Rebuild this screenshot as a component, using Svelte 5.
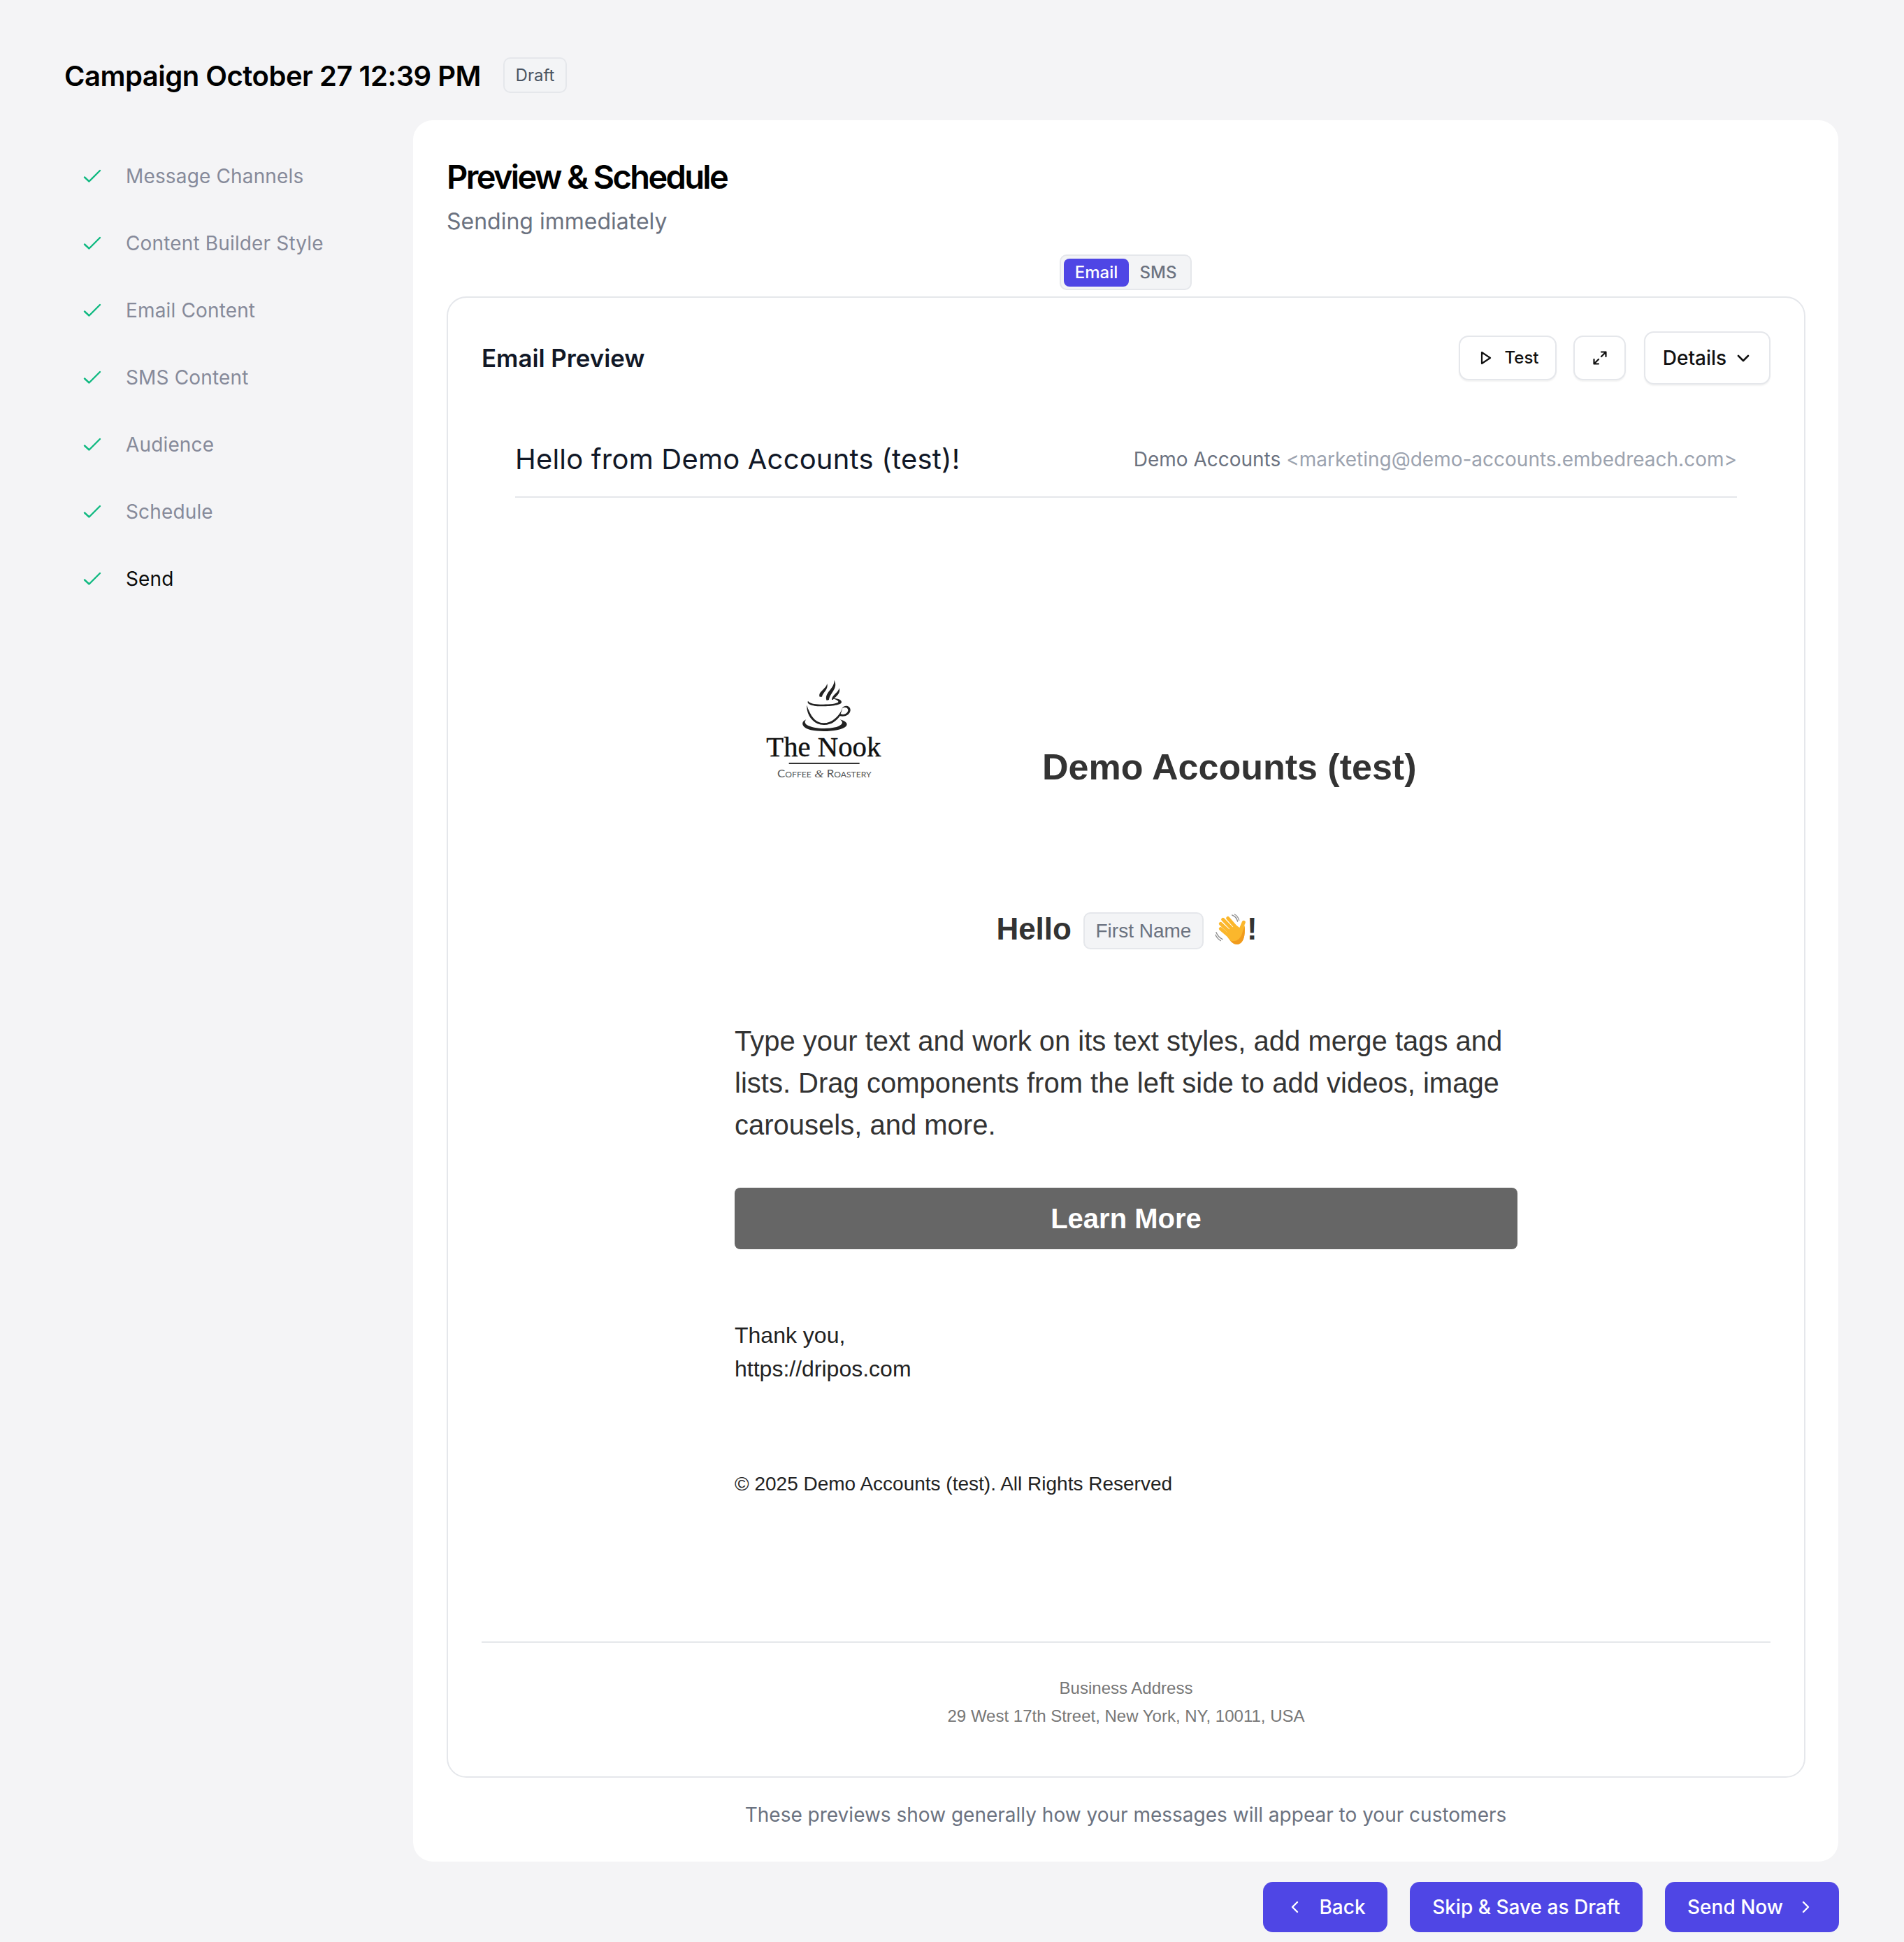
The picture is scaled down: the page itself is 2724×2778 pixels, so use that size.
<script>
  const steps = ['Message Channels','Content Builder Style','Email Content','SMS Content','Audience','Schedule','Send'];
</script>

<div class="page">
  <header class="top">
    <h1>Campaign October 27 12:39 PM</h1>
    <span class="draft">Draft</span>
  </header>
  <div class="main">
    <nav class="steps">
      {#each steps as s, i}
        <div class="step" class:current={i === steps.length - 1}>
          <svg class="check" viewBox="0 0 28 20" width="28" height="20"><path d="M3 11.5 L9.5 17.5 L25 2" fill="none" stroke="#10b981" stroke-width="2.4" stroke-linecap="round" stroke-linejoin="round"/></svg>
          <span>{s}</span>
        </div>
      {/each}
    </nav>
    <section class="card">
      <h2>Preview &amp; Schedule</h2>
      <p class="sub">Sending immediately</p>
      <div class="toggle-row">
        <div class="toggle"><span class="on">Email</span><span class="off">SMS</span></div>
      </div>
      <div class="preview">
        <div class="phead">
          <h3>Email Preview</h3>
          <div class="tools">
            <button class="tool test">
              <svg viewBox="0 0 24 24" width="24" height="24"><path d="M7 4 L19 12 L7 20 Z" fill="none" stroke="#111" stroke-width="2.2" stroke-linejoin="round"/></svg>
              Test
            </button>
            <button class="tool exp" aria-label="Expand">
              <svg viewBox="0 0 24 24" width="24" height="24"><path d="M14 3.5 H20.5 V10 M20.5 3.5 L14 10 M3.5 14 V20.5 H10 M3.5 20.5 L10 14" fill="none" stroke="#111" stroke-width="2.2" stroke-linecap="round" stroke-linejoin="round"/></svg>
            </button>
            <button class="tool details">
              Details
              <svg viewBox="0 0 24 24" width="24" height="24"><path d="M5 9 L12 16 L19 9" fill="none" stroke="#111" stroke-width="2.6" stroke-linecap="round" stroke-linejoin="round"/></svg>
            </button>
          </div>
        </div>
        <div class="subject">
          <div class="subj">Hello from Demo Accounts (test)!</div>
          <div class="from">Demo Accounts <span>&lt;marketing@demo-accounts.embedreach.com&gt;</span></div>
        </div>
        <div class="brand">
          <svg class="logo" viewBox="0 0 720 540" width="240" height="180">
            <g fill="#222" transform="translate(240 45)">
              <path d="M98 92 C90 70 125 60 130 35 C137 60 112 72 108 92Z"/>
              <path d="M128 108 C115 75 165 55 160 20 C180 55 142 75 138 105Z"/>
              <path d="M150 105 C150 85 178 75 182 55 C190 80 165 92 155 105Z"/>
              <path d="M48 110 C40 125 70 133 110 133 C150 133 192 128 192 115 C192 103 170 98 148 98 C165 102 180 108 178 115 C170 124 130 126 100 125 C75 124 55 120 48 110Z"/>
              <path d="M43 128 C40 170 70 212 115 213 C150 214 170 195 185 175 C205 180 228 170 230 150 C231 135 215 125 200 135 L192 143 C205 133 220 138 220 150 C218 165 200 172 188 165 C192 155 195 148 196 140 C185 170 155 205 115 205 C80 205 58 175 43 128Z"/>
              <path d="M40 190 C15 200 20 225 60 235 C110 245 190 240 212 218 C222 205 205 195 185 190 C200 200 200 212 170 222 C130 232 70 230 42 212 C33 205 33 197 40 190Z"/>
            </g>
            <text x="355" y="393" text-anchor="middle" class="nook" textLength="492" lengthAdjust="spacingAndGlyphs">The Nook</text>
            <rect x="206" y="420" width="303" height="6" fill="#333"/>
            <text x="358" y="484" text-anchor="middle" class="roast" textLength="404" lengthAdjust="spacingAndGlyphs">Coffee <tspan class="amp">&amp;</tspan> Roastery</text>
          </svg>
          <div class="bname">Demo Accounts (test)</div>
        </div>
        <div class="hello">
          <span class="h">Hello</span>
          <span class="tag">First Name</span>
          <svg class="wave" viewBox="22 25 135 135" width="45" height="45">
            <g fill="none" stroke="#8c8c8c" stroke-width="4" stroke-linecap="round"><path d="M28 105 C33 118 42 128 55 135"/><path d="M25 116 C30 128 37 135 47 141"/><path d="M96 31 C108 35 116 44 120 58"/><path d="M107 28 C117 33 123 42 126 53"/></g>
            <g stroke="#fbb72c" stroke-width="15" stroke-linecap="round" fill="none">
              <path d="M78 44 L118 90"/><path d="M57 50 L100 95"/><path d="M47 68 L90 108"/><path d="M47 90 L85 122"/><path d="M146 62 L130 100"/>
            </g>
            <path d="M85 90 L115 75 L135 90 L150 75 C152 110 150 150 120 157 C100 158 85 140 72 118Z" fill="#fbb72c"/>
            <path d="M150 80 C152 112 150 150 120 157 C105 158 96 150 88 140 C110 150 135 135 142 100Z" fill="#f19b1d"/>
          </svg>
          <span class="h bang">!</span>
        </div>
        <div class="content">
          <p class="body">Type your text and work on its text styles, add merge tags and lists. Drag components from the left side to add videos, image carousels, and more.</p>
          <div class="cta">Learn More</div>
          <p class="thanks">Thank you,<br />https://dripos.com</p>
          <p class="copy">© 2025 Demo Accounts (test). All Rights Reserved</p>
        </div>
        <div class="addr">
          <div>Business Address</div>
          <div>29 West 17th Street, New York, NY, 10011, USA</div>
        </div>
      </div>
      <p class="note">These previews show generally how your messages will appear to your customers</p>
    </section>
  </div>
  <footer class="actions">
    <button class="act back">
      <svg viewBox="0 0 24 24" width="24" height="24"><path d="M15 5 L8 12 L15 19" fill="none" stroke="#fff" stroke-width="2.4" stroke-linecap="round" stroke-linejoin="round"/></svg>
      Back
    </button>
    <button class="act skip">Skip &amp; Save as Draft</button>
    <button class="act send">
      Send Now
      <svg viewBox="0 0 24 24" width="24" height="24"><path d="M9 5 L16 12 L9 19" fill="none" stroke="#fff" stroke-width="2.4" stroke-linecap="round" stroke-linejoin="round"/></svg>
    </button>
  </footer>
</div>

<style>
  :global(body) { margin: 0; background: #f4f4f6; }
  .page { width: 2724px; height: 2778px; box-sizing: border-box; padding-top: 82px; font-family: Inter, sans-serif; background: #f4f4f6; }
  .top { display: flex; align-items: center; gap: 32px; height: 51px; padding-left: 92px; }
  h1 { margin: 0; position: relative; top: 1px; font-size: 40px; font-weight: 600; color: #000; letter-spacing: -0.5px; white-space: nowrap; }
  .draft { box-sizing: border-box; width: 91px; height: 51px; display: flex; align-items: center; justify-content: center; border: 2px solid #e5e7eb; border-radius: 10px; background: #f3f4f6; font-size: 24px; color: #4b5563; }
  .main { display: grid; grid-template-columns: 499px 2039px; margin-top: 39px; padding-left: 92px; }
  .steps { padding-top: 48px; padding-left: 26px; }
  .step { display: flex; align-items: center; height: 64px; margin-bottom: 32px; color: #868a9a; font-size: 28px; letter-spacing: .15px; gap: 34px; }
  .step.current { color: #0a0a0a; }
  .check { flex: none; }
  .card { box-sizing: border-box; height: 2491px; background: #fff; border-radius: 28px; padding: 0 48px; }
  h2 { margin: 0; padding-top: 52px; font-size: 47px; line-height: 58px; font-weight: 600; color: #000; letter-spacing: -2.65px; }
  .sub { margin: 0; margin-top: 10px; font-size: 32px; line-height: 50px; color: #6b7280; }
  .toggle-row { display: flex; justify-content: center; margin-top: 22px; height: 51px; }
  .toggle { box-sizing: border-box; width: 189px; height: 51px; display: flex; align-items: center; padding: 0 4px; background: #f3f4f6; border: 2px solid #e5e7eb; border-radius: 10px; font-size: 24px; }
  .toggle .on { width: 93px; height: 40px; display: flex; align-items: center; justify-content: center; background: #4f46e5; color: #fff; border-radius: 8px; font-weight: 500; }
  .toggle .off { flex: 1; text-align: center; color: #6b7280; font-weight: 500; }
  .preview { box-sizing: border-box; height: 2119px; margin-top: 9px; margin-right: -1px; border: 2px solid #e5e7eb; border-radius: 28px; padding: 0 48px; }
  .phead { display: flex; align-items: center; justify-content: space-between; height: 171px; }
  h3 { margin: 0; font-size: 34.8px; font-weight: 600; color: #111827; }
  .tools { display: flex; align-items: center; gap: 24px; }
  button { font-family: inherit; cursor: pointer; }
  .tool { box-sizing: border-box; display: flex; align-items: center; justify-content: center; background: #fff; border: 2px solid #e5e7eb; border-radius: 14px; color: #111; box-shadow: 0 2px 2px rgba(0,0,0,.05); padding: 0; }
  .test { width: 140px; height: 64px; gap: 16px; font-size: 24px; font-weight: 500; }
  .exp { width: 75px; height: 64px; margin-right: 2px; }
  .details { width: 181px; height: 76px; gap: 12px; font-size: 28px; font-weight: 500; }
  .subject { display: flex; align-items: center; justify-content: space-between; margin: 0 48px; height: 115px; padding-top: 6px; border-bottom: 2px solid #e5e7eb; box-sizing: border-box; }
  .subj { font-size: 40px; font-weight: 400; letter-spacing: .2px; color: #111827; }
  .from { font-size: 28px; color: #6b7280; }
  .from span { color: #9ca3af; }
  .brand { position: relative; display: flex; align-items: flex-start; height: 0; }
  .logo { margin-left: 371px; margin-top: 239px; flex: none; }
  .bname { margin-left: 191px; margin-top: 352px; font-family: "Liberation Sans", Arial, sans-serif; font-weight: 700; font-size: 52px; line-height: 66px; color: #333; white-space: nowrap; }
  .nook { font-family: "Liberation Serif", serif; font-size: 118px; fill: #111; stroke: #111; stroke-width: 1.2px; }
  .roast { font-family: Lato, sans-serif; font-variant: small-caps; font-size: 46px; fill: #555; }
  .amp { font-family: "Liberation Serif", serif; font-style: italic; }
  .hello { display: flex; align-items: center; justify-content: center; height: 60px; margin-top: 587px; padding-left: 2px; font-family: "Liberation Sans", Arial, sans-serif; color: #333; }
  .h { font-size: 44px; font-weight: 700; line-height: 60px; }
  .bang { margin-left: 1px; }
  .tag { box-sizing: border-box; display: flex; align-items: center; justify-content: center; width: 172px; height: 53px; margin: 5px 16px 0 17px; background: #f3f4f6; border: 2px solid #e5e7eb; border-radius: 10px; font-size: 28px; color: #6b7280; }
  .wave { flex: none; }
  .content { width: 1120px; margin: 0 auto; font-family: "Liberation Sans", Arial, sans-serif; }
  .body { margin: 0; margin-top: 100px; font-size: 40px; line-height: 60px; color: #333; }
  .cta { height: 88px; margin-top: 60px; display: flex; align-items: center; justify-content: center; background: #666; color: #fff; border-radius: 8px; font-size: 40px; font-weight: 700; }
  .thanks { margin: 0; margin-top: 99px; font-size: 32px; line-height: 48px; color: #222; }
  .copy { margin: 0; margin-top: 121px; font-size: 28px; line-height: 40px; color: #222; }
  .addr { margin-top: 205px; border-top: 2px solid #e5e7eb; padding-top: 45px; text-align: center; font-family: "Liberation Sans", Arial, sans-serif; font-size: 24px; line-height: 40px; color: #777; }
  .note { margin: 0; margin-top: 30px; text-align: center; font-size: 28px; line-height: 46px; color: #6b7280; }
  .actions { display: flex; justify-content: flex-end; gap: 32px; margin-top: 29px; padding-right: 93px; }
  .act { box-sizing: border-box; height: 72px; display: flex; align-items: center; justify-content: center; background: #4f46e5; color: #fff; border: 0; border-radius: 14px; font-size: 28px; font-weight: 500; padding: 0; }
  .back { width: 178px; gap: 22px; padding-left: 3px; }
  .skip { width: 333px; }
  .send { width: 249px; gap: 20px; padding-right: 4px; }
</style>
